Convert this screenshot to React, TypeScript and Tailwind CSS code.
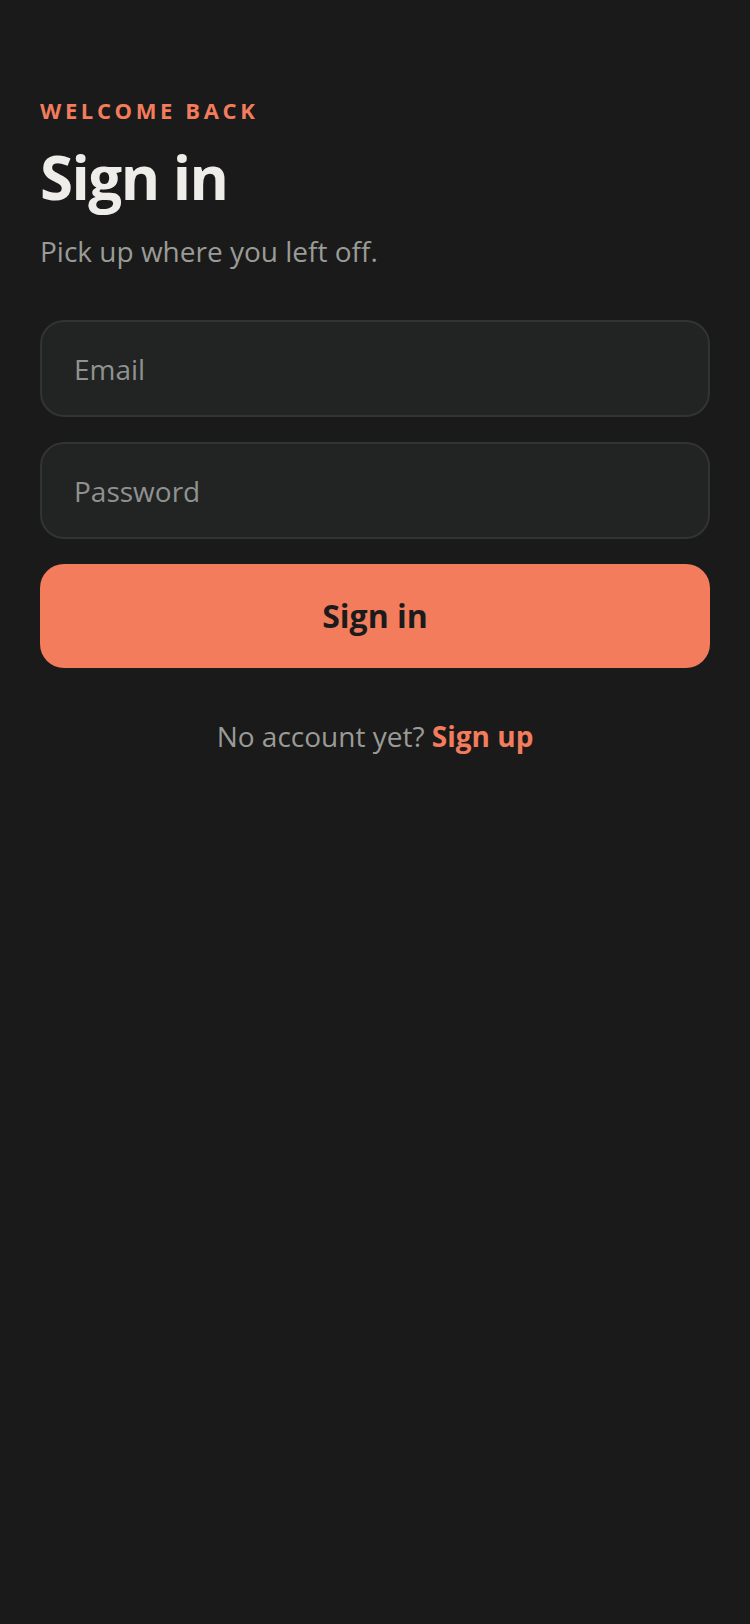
import React from "react";

export default function App() {
  return (
    <div
      className="min-h-[1624px] w-full bg-[#191a19] px-10"
      style={{ fontFamily: '"Open Sans", "Noto Sans", sans-serif' }}
    >
      <div className="pt-[99px]">
        <p className="text-[22px] leading-[22px] font-bold tracking-[0.165em] text-[#f27c5c]">
          WELCOME BACK
        </p>
        <h1 className="mt-[26px] text-[60px] leading-[60px] font-bold tracking-[-0.025em] text-[#eeede9]">
          Sign in
        </h1>
        <p className="mt-[30px] text-[28px] leading-[28px] text-[#9a9b97]">
          Pick up where you left off.
        </p>
      </div>

      <form className="mt-[55px] flex flex-col gap-[25px]" onSubmit={(e) => e.preventDefault()}>
        <input
          type="email"
          placeholder="Email"
          className="h-[97px] w-full rounded-[24px] border-2 border-[#313433] bg-[#212423] px-8 text-[28px] text-[#eeede9] placeholder:text-[#8f928f] outline-none"
        />
        <input
          type="password"
          placeholder="Password"
          className="h-[97px] w-full rounded-[24px] border-2 border-[#313433] bg-[#212423] px-8 text-[28px] text-[#eeede9] placeholder:text-[#8f928f] outline-none"
        />
        <button
          type="submit"
          className="h-[104px] w-full rounded-[24px] bg-[#f27c5c] text-[32px] font-bold text-[#1a1b1a]"
        >
          Sign in
        </button>
      </form>

      <p className="mt-[54px] text-center text-[28px] leading-[28px] text-[#9a9b97]">
        No account yet? <span className="font-bold text-[#f27c5c]">Sign up</span>
      </p>
    </div>
  );
}
